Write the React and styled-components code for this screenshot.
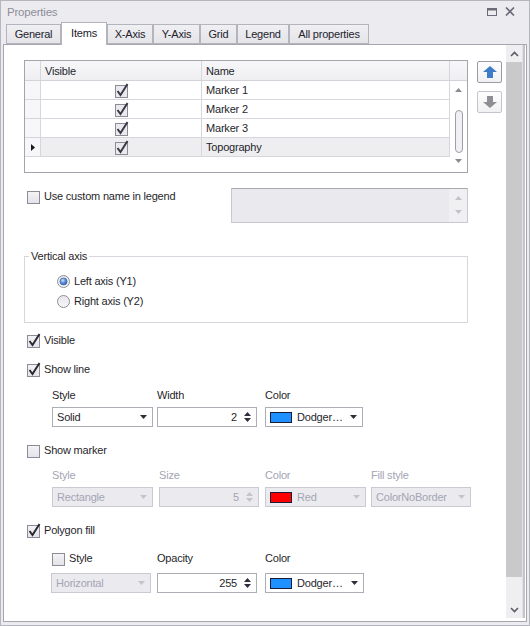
import React from 'react';
import styled, { createGlobalStyle } from 'styled-components';

const GlobalStyle = createGlobalStyle`
  html, body {
    margin: 0;
    padding: 0;
    background: #ffffff;
  }
  body {
    font-family: "Liberation Sans", Arial, sans-serif;
    font-size: 11px;
    letter-spacing: -0.2px;
    color: #1f1f2b;
  }
`;

const Window = styled.div`
  width: 530px;
  height: 626px;
  box-sizing: border-box;
  border: 1px solid #b6b6be;
  background: #ececf0;
  display: flex;
  flex-direction: column;
`;

const TitleBar = styled.div`
  height: 21px;
  display: flex;
  align-items: center;
  padding: 0 14px 0 6px;
  color: #8c8c98;
  font-size: 11.5px;
`;

const TitleText = styled.span`
  flex: 1;
`;

const TitleButtons = styled.div`
  display: flex;
  align-items: center;
  gap: 8px;
`;

const TabStrip = styled.div`
  height: 22px;
  display: flex;
  align-items: flex-end;
  padding-left: 5px;
`;

const Tab = styled.div`
  position: relative;
  z-index: ${({ active }) => (active ? 2 : 1)};
  box-sizing: border-box;
  width: ${({ w }) => w}px;
  height: ${({ active }) => (active ? 23 : 20)}px;
  margin-bottom: ${({ active }) => (active ? -1 : 0)}px;
  display: flex;
  align-items: center;
  justify-content: center;
  border: 1px solid #b4b4bc;
  border-bottom: ${({ active }) => (active ? 'none' : '1px solid #b4b4bc')};
  background: ${({ active }) => (active ? '#ffffff' : 'linear-gradient(#f0f0f3, #e4e4e9)')};
  color: #22222c;
  padding-bottom: ${({ active }) => (active ? 3 : 0)}px;
`;

const Panel = styled.div`
  flex: 1;
  margin: 0 2px 3px 2px;
  border: 1px solid #a6a6ae;
  background: #ffffff;
  display: flex;
  min-height: 0;
`;

const Content = styled.div`
  flex: 1;
  padding: 15px 0 0 20px;
  display: flex;
  flex-direction: column;
`;

/* main vertical scroll bar of the tab page */
const ScrollBar = styled.div`
  width: 16px;
  margin: 0 4px 3px 0;
  display: flex;
  flex-direction: column;
  background: #efeff1;
  box-shadow: 1px 0 0 #e2e2e6, 3px 0 0 #c4c4cc;
`;

const ScrollArrow = styled.div`
  height: 17px;
  display: flex;
  align-items: center;
  justify-content: center;
`;

const ScrollThumb = styled.div`
  height: 515px;
  background: #c9c9cb;
`;

const ScrollTrack = styled.div`
  flex: 1;
`;

/* items grid */
const GridRow = styled.div`
  display: flex;
  align-items: flex-start;
`;

const Grid = styled.div`
  width: 444px;
  height: 113px;
  box-sizing: border-box;
  border: 1px solid #a4a4ac;
  display: flex;
  flex-direction: column;
`;

const HeaderRow = styled.div`
  display: flex;
  height: 20px;
  box-sizing: border-box;
  border-bottom: 1px solid #d2d2d8;
  background: linear-gradient(#f7f7f9, #efeff2);
`;

const HeadCell = styled.div`
  width: ${({ w }) => w}px;
  box-sizing: border-box;
  border-right: ${({ last }) => (last ? 'none' : '1px solid #d6d6dc')};
  display: flex;
  align-items: center;
  padding-left: 4px;
`;

const GridBody = styled.div`
  flex: 1;
  display: flex;
`;

const Rows = styled.div`
  display: flex;
  flex-direction: column;
  width: 425px;
`;

const DataRow = styled.div`
  display: flex;
  height: 19px;
  box-sizing: border-box;
  border-bottom: 1px solid #d6d6dc;
  background: ${({ focused }) => (focused ? '#eeeef1' : '#ffffff')};
`;

const Cell = styled.div`
  width: ${({ w }) => w}px;
  box-sizing: border-box;
  border-right: 1px solid #d6d6dc;
  display: flex;
  align-items: center;
  justify-content: ${({ center }) => (center ? 'center' : 'flex-start')};
  padding-left: ${({ pad }) => pad || 0}px;
  background: ${({ indicator }) => (indicator ? '#f7f7f9' : 'transparent')};
`;

const GridScroll = styled.div`
  width: 17px;
  display: flex;
  flex-direction: column;
  align-items: center;
  padding-top: 7px;
`;

const GridThumb = styled.div`
  width: 8px;
  height: 43px;
  box-sizing: border-box;
  border: 1px solid #9e9ea8;
  border-radius: 4px;
  background: #f1f1f3;
  margin: 18px 0 6px;
`;

const MoveButtons = styled.div`
  margin: 1px 0 0 9px;
  display: flex;
  flex-direction: column;
  gap: 8px;
`;

const MoveButton = styled.div`
  width: 25px;
  height: 22px;
  box-sizing: border-box;
  border: 1px solid ${({ focused }) => (focused ? '#9a9aa4' : '#c4c4cc')};
  border-radius: 2px;
  background: linear-gradient(#fdfdfd, #f1f1f3);
  display: flex;
  align-items: center;
  justify-content: center;
`;

/* check boxes, radios and their rows */
const CustomRow = styled.div`
  margin-top: 15px;
  display: flex;
  align-items: flex-start;
`;

const CheckRow = styled.label`
  display: flex;
  align-items: center;
  gap: 4px;
  height: ${({ h }) => h || 20}px;
  width: ${({ w }) => (w ? `${w}px` : 'auto')};
  padding-left: ${({ indent }) => (indent === undefined ? 3 : indent)}px;
  margin-top: ${({ mt }) => mt || 0}px;
  box-sizing: border-box;
  color: ${({ disabled }) => (disabled ? '#a4a4b4' : '#1f1f2b')};
`;

const NameBox = styled.div`
  width: 237px;
  height: 35px;
  box-sizing: border-box;
  border: 1px solid #c8c8d0;
  border-top-color: #a8a8b0;
  background: #eaeaee;
  display: flex;
  justify-content: flex-end;
`;

const NameSpin = styled.div`
  width: 18px;
  background: #f0f0f3;
  display: flex;
  flex-direction: column;
  align-items: center;
  justify-content: space-between;
  padding: 7px 0 8px;
`;

const GroupBox = styled.fieldset`
  margin: 26px 0 0 0;
  width: 444px;
  box-sizing: border-box;
  border: 1px solid #d6d6dc;
  padding: 8px 0 11px 32px;
  display: flex;
  flex-direction: column;
`;

const GroupTitle = styled.legend`
  padding: 0 2px;
  margin-left: -28px;
  line-height: 14px;
`;

const RadioRow = styled.div`
  display: flex;
  align-items: center;
  gap: 4px;
  height: 20px;
`;

/* labelled editors under a check box */
const FieldGrid = styled.div`
  margin: ${({ mt }) => mt}px 0 0 ${({ ml }) => ml}px;
  display: grid;
  grid-template-columns: ${({ cols }) => cols};
  row-gap: ${({ gap }) => gap}px;
  align-items: center;
`;

const FieldLabel = styled.div`
  height: ${({ h }) => h || 14}px;
  display: flex;
  align-items: center;
  color: ${({ disabled }) => (disabled ? '#a4a4b4' : '#1f1f2b')};
`;

const Editor = styled.div`
  width: ${({ w }) => w}px;
  height: 20px;
  box-sizing: border-box;
  border: 1px solid ${({ disabled }) => (disabled ? '#cacad2' : '#adadb5')};
  background: ${({ disabled }) => (disabled ? '#ebebef' : '#ffffff')};
  color: ${({ disabled }) => (disabled ? '#a4a4b4' : '#1f1f2b')};
  display: flex;
  align-items: center;
  padding: 0 5px 0 4px;
  gap: 5px;
`;

const EditorText = styled.span`
  flex: 1;
  text-align: ${({ right }) => (right ? 'right' : 'left')};
  padding-right: ${({ right }) => (right ? 2 : 0)}px;
  white-space: nowrap;
`;

const Swatch = styled.span`
  width: 22px;
  height: 11px;
  box-sizing: border-box;
  border: 1px solid #1b1b3a;
  background: ${({ color }) => color};
`;

const SpinArrows = styled.span`
  display: flex;
  flex-direction: column;
  gap: 2px;
`;

const Tri = ({ dir = 'down', color = '#2e2e38', w = 7, h = 4 }) => (
  <svg width={w} height={h} viewBox={`0 0 ${w} ${h}`}>
    <polygon
      points={dir === 'down' ? `0,0 ${w},0 ${w / 2},${h}` : `0,${h} ${w},${h} ${w / 2},0`}
      fill={color}
    />
  </svg>
);

const Chevron = ({ dir }) => (
  <svg width="9" height="6" viewBox="0 0 9 6">
    <polyline
      points={dir === 'up' ? '1,5 4.5,1.5 8,5' : '1,1 4.5,4.5 8,1'}
      fill="none"
      stroke="#5c5c66"
      strokeWidth="1.6"
    />
  </svg>
);

const CheckBox = ({ checked, grid }) => (
  <svg width="13" height="15" viewBox="0 0 13 15" style={{ overflow: 'visible', flex: 'none' }}>
    <defs>
      <linearGradient id="cbFill" x1="0" y1="0" x2="0" y2="1">
        <stop offset="0" stopColor="#f4f4f6" />
        <stop offset="1" stopColor="#e2e2e8" />
      </linearGradient>
    </defs>
    <rect x="0.5" y="2.5" width="12" height="12" fill={grid ? '#e9e9ee' : 'url(#cbFill)'} stroke="#8c8c98" />
    {checked && (
      <polyline
        points="2.5,8 5.5,12 12.5,1"
        fill="none"
        stroke={grid ? '#3a3a46' : '#2a2a32'}
        strokeWidth="2"
        strokeLinejoin="miter"
      />
    )}
  </svg>
);

const Radio = ({ checked }) => (
  <svg width="13" height="13" viewBox="0 0 13 13">
    <defs>
      <radialGradient id="rdDot" cx="0.4" cy="0.35" r="0.7">
        <stop offset="0" stopColor="#cfe2ff" />
        <stop offset="0.5" stopColor="#5c8fdc" />
        <stop offset="1" stopColor="#2d5fae" />
      </radialGradient>
      <linearGradient id="rdBg" x1="0" y1="0" x2="0" y2="1">
        <stop offset="0" stopColor="#e6e6ea" />
        <stop offset="1" stopColor="#f8f8fa" />
      </linearGradient>
    </defs>
    <circle cx="6.5" cy="6.5" r="6" fill="url(#rdBg)" stroke="#8e8e9a" />
    {checked && <circle cx="6.5" cy="6.5" r="3.6" fill="url(#rdDot)" stroke="#3b5f96" strokeWidth="0.6" />}
  </svg>
);

const MoveArrow = ({ dir, color }) => (
  <svg width="14" height="12" viewBox="0 0 14 12">
    <polygon
      points={
        dir === 'up'
          ? '7,0 14,6 10,6 10,12 4,12 4,6 0,6'
          : '7,12 14,6 10,6 10,0 4,0 4,6 0,6'
      }
      fill={color}
    />
  </svg>
);

const Combo = ({ w, text, swatch, disabled }) => (
  <Editor w={w} disabled={disabled}>
    {swatch && <Swatch color={swatch} />}
    <EditorText>{text}</EditorText>
    <Tri color={disabled ? '#c4c4cc' : '#2e2e38'} />
  </Editor>
);

const Spin = ({ w, value, disabled }) => (
  <Editor w={w} disabled={disabled}>
    <EditorText right>{value}</EditorText>
    <SpinArrows>
      <Tri dir="up" color={disabled ? '#c4c4cc' : '#2e2e38'} />
      <Tri color={disabled ? '#c4c4cc' : '#2e2e38'} />
    </SpinArrows>
  </Editor>
);

const tabs = [
  { name: 'General', w: 55 },
  { name: 'Items', w: 46, active: true },
  { name: 'X-Axis', w: 46 },
  { name: 'Y-Axis', w: 47 },
  { name: 'Grid', w: 37 },
  { name: 'Legend', w: 52 },
  { name: 'All properties', w: 80 },
];

const items = ['Marker 1', 'Marker 2', 'Marker 3', 'Topography'];

export default function App() {
  return (
    <>
      <GlobalStyle />
      <Window>
        <TitleBar>
          <TitleText>Properties</TitleText>
          <TitleButtons>
            <svg width="10" height="8" viewBox="0 0 10 8">
              <rect x="0.5" y="0.5" width="9" height="7" fill="none" stroke="#6c6c78" />
              <rect x="0" y="0" width="10" height="2.5" fill="#6c6c78" />
            </svg>
            <svg width="10" height="9" viewBox="0 0 10 9">
              <path d="M1 0.5 L9 8.5 M9 0.5 L1 8.5" stroke="#6c6c78" strokeWidth="1.7" />
            </svg>
          </TitleButtons>
        </TitleBar>

        <TabStrip>
          {tabs.map((t) => (
            <Tab key={t.name} w={t.w} active={t.active}>
              {t.name}
            </Tab>
          ))}
        </TabStrip>

        <Panel>
          <Content>
            <GridRow>
              <Grid>
                <HeaderRow>
                  <HeadCell w={16} />
                  <HeadCell w={161}>Visible</HeadCell>
                  <HeadCell w={248}>Name</HeadCell>
                  <HeadCell w={17} last />
                </HeaderRow>
                <GridBody>
                  <Rows>
                    {items.map((name, i) => {
                      const focused = i === items.length - 1;
                      return (
                        <DataRow key={name} focused={focused}>
                          <Cell w={16} indicator center>
                            {focused && (
                              <svg width="4" height="7" viewBox="0 0 4 7">
                                <polygon points="0,0 4,3.5 0,7" fill="#1a1a1a" />
                              </svg>
                            )}
                          </Cell>
                          <Cell w={161} center>
                            <CheckBox checked grid />
                          </Cell>
                          <Cell w={248} pad={4}>
                            {name}
                          </Cell>
                        </DataRow>
                      );
                    })}
                  </Rows>
                  <GridScroll>
                    <Tri dir="up" color="#8a8a94" w={7} h={4} />
                    <GridThumb />
                    <Tri color="#8a8a94" w={7} h={4} />
                  </GridScroll>
                </GridBody>
              </Grid>
              <MoveButtons>
                <MoveButton focused>
                  <MoveArrow dir="up" color="#3d7cc6" />
                </MoveButton>
                <MoveButton>
                  <MoveArrow dir="down" color="#8e8e94" />
                </MoveButton>
              </MoveButtons>
            </GridRow>

            <CustomRow>
              <CheckRow w={207} h={16}>
                <CheckBox />
                Use custom name in legend
              </CheckRow>
              <NameBox>
                <NameSpin>
                  <Tri dir="up" color="#c2c2ca" />
                  <Tri color="#c2c2ca" />
                </NameSpin>
              </NameBox>
            </CustomRow>

            <GroupBox>
              <GroupTitle>Vertical axis</GroupTitle>
              <RadioRow>
                <Radio checked />
                Left axis (Y1)
              </RadioRow>
              <RadioRow>
                <Radio />
                Right axis (Y2)
              </RadioRow>
            </GroupBox>

            <CheckRow mt={7}>
              <CheckBox checked />
              Visible
            </CheckRow>

            <CheckRow mt={9}>
              <CheckBox checked />
              Show line
            </CheckRow>
            <FieldGrid mt={9} ml={28} gap={5} cols="105px 108px auto">
              <FieldLabel>Style</FieldLabel>
              <FieldLabel>Width</FieldLabel>
              <FieldLabel>Color</FieldLabel>
              <Combo w={101} text="Solid" />
              <Spin w={100} value="2" />
              <Combo w={98} text="Dodger…" swatch="#1e90ff" />
            </FieldGrid>

            <CheckRow mt={13}>
              <CheckBox />
              Show marker
            </CheckRow>
            <FieldGrid mt={8} ml={28} gap={5} cols="107px 106px 106px auto">
              <FieldLabel disabled>Style</FieldLabel>
              <FieldLabel disabled>Size</FieldLabel>
              <FieldLabel disabled>Color</FieldLabel>
              <FieldLabel disabled>Fill style</FieldLabel>
              <Combo w={101} text="Rectangle" disabled />
              <Spin w={100} value="5" disabled />
              <Combo w={101} text="Red" swatch="#ff0000" disabled />
              <Combo w={100} text="ColorNoBorder" disabled />
            </FieldGrid>

            <CheckRow mt={13}>
              <CheckBox checked />
              Polygon fill
            </CheckRow>
            <FieldGrid mt={10} ml={27} gap={7} cols="106px 108px auto">
              <CheckRow h={16} indent={1}>
                <CheckBox />
                Style
              </CheckRow>
              <FieldLabel h={16}>Opacity</FieldLabel>
              <FieldLabel h={16}>Color</FieldLabel>
              <Combo w={100} text="Horizontal" disabled />
              <Spin w={100} value="255" />
              <Combo w={99} text="Dodger…" swatch="#1e90ff" />
            </FieldGrid>
          </Content>

          <ScrollBar>
            <ScrollArrow>
              <Chevron dir="up" />
            </ScrollArrow>
            <ScrollThumb />
            <ScrollTrack />
            <ScrollArrow>
              <Chevron dir="down" />
            </ScrollArrow>
          </ScrollBar>
        </Panel>
      </Window>
    </>
  );
}
